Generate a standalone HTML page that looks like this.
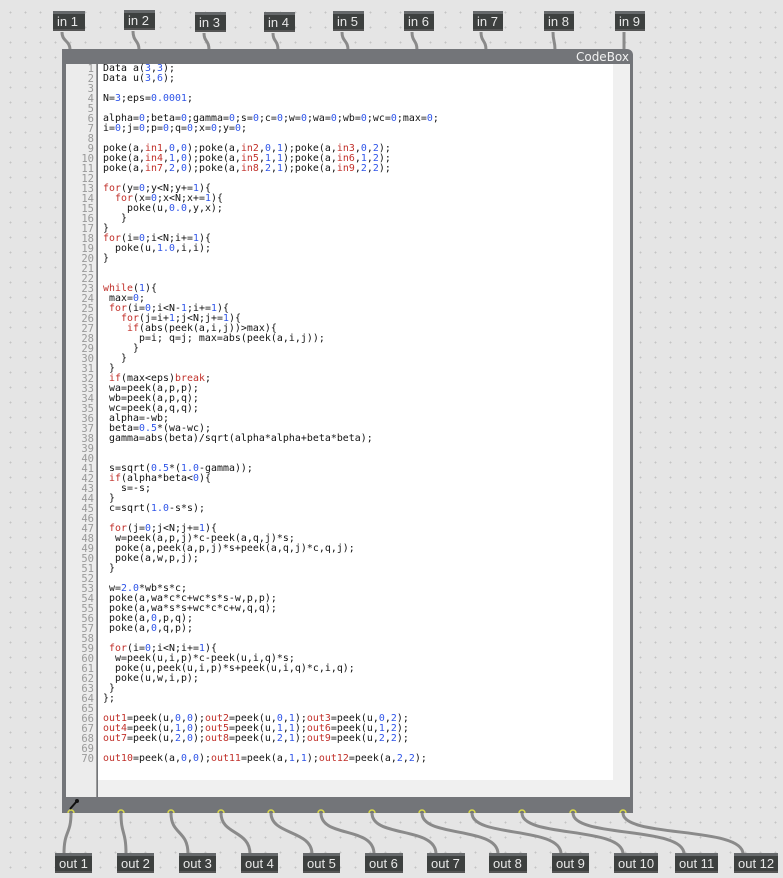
<!DOCTYPE html>
<html><head><meta charset="utf-8"><style>
*{margin:0;padding:0;box-sizing:border-box}
body{width:783px;height:878px;overflow:hidden;position:relative;background-color:#e5e5e5;
background-image:radial-gradient(circle,#c4c4c4 0.8px,transparent 1px);background-size:15px 15px;background-position:3px 5px;font-family:"Liberation Sans",sans-serif}
.obj{position:absolute;height:20px;background:#3d403f;border-top:3px solid #66696b;border-bottom:2px solid #555;color:#e8e8e8;font-size:13px;line-height:15px;padding-left:4px}
#cb{position:absolute;left:62px;top:49px;width:571px;height:764px;background:#737579;border-radius:0 6px 0 0}
#title{position:absolute;right:4px;top:1px;color:#f2f2f2;font-size:12px;font-family:"DejaVu Sans",sans-serif}
#gut{position:absolute;left:4px;top:15px;width:31px;height:733px;background:#ececec;border-right:1px solid #9a9a9a}
#code{position:absolute;left:36px;top:15px;width:532px;height:733px;background:#f0f0f0}
#white{position:absolute;left:0;top:0;width:515px;height:716px;background:#fff}
pre{position:absolute;font-family:"DejaVu Sans Mono","Liberation Mono",monospace;font-size:9.9px;line-height:10px;letter-spacing:0.05px}
#nums{left:0;top:0;width:28px;text-align:right;color:#999;font-size:10.5px;letter-spacing:0}
#src{left:5px;top:0;color:#111}
b{color:#c0302a;font-weight:normal}
i{color:#2f55e8;font-style:normal}
svg{position:absolute;left:0;top:0}
</style></head><body>
<div class="obj" style="left:53px;top:11px;width:32px">in 1</div>
<div class="obj" style="left:124px;top:10px;width:31px">in 2</div>
<div class="obj" style="left:195px;top:12px;width:31px">in 3</div>
<div class="obj" style="left:264px;top:12px;width:31px">in 4</div>
<div class="obj" style="left:333px;top:11px;width:31px">in 5</div>
<div class="obj" style="left:404px;top:11px;width:30px">in 6</div>
<div class="obj" style="left:473px;top:11px;width:30px">in 7</div>
<div class="obj" style="left:544px;top:11px;width:30px">in 8</div>
<div class="obj" style="left:615px;top:11px;width:30px">in 9</div>
<svg width="783" height="878">
<g stroke="#8a8a8a" stroke-width="3" fill="none">
<path d="M62 32 C62 42 70 40 70 50"/><path d="M133 31 C133 42 139 40 139 50"/><path d="M204 33 C204 42 209 40 209 50"/><path d="M273 33 C273 42 278 40 278 50"/><path d="M342 32 C342 42 348 40 348 50"/><path d="M412 32 C412 42 417 40 417 50"/><path d="M481 32 C481 42 486 40 486 50"/><path d="M553 32 C553 42 555 40 555 50"/><path d="M624 32 L624 50"/>
</g></svg>
<div id="cb"><div id="title">CodeBox</div>
<div id="gut"><pre id="nums">1
2
3
4
5
6
7
8
9
10
11
12
13
14
15
16
17
18
19
20
21
22
23
24
25
26
27
28
29
30
31
32
33
34
35
36
37
38
39
40
41
42
43
44
45
46
47
48
49
50
51
52
53
54
55
56
57
58
59
60
61
62
63
64
65
66
67
68
69
70</pre></div>
<div id="code"><div id="white"><pre id="src">Data a(<i>3</i>,<i>3</i>);
Data u(<i>3</i>,<i>6</i>);

N=<i>3</i>;eps=<i>0.0001</i>;

alpha=<i>0</i>;beta=<i>0</i>;gamma=<i>0</i>;s=<i>0</i>;c=<i>0</i>;w=<i>0</i>;wa=<i>0</i>;wb=<i>0</i>;wc=<i>0</i>;max=<i>0</i>;
i=<i>0</i>;j=<i>0</i>;p=<i>0</i>;q=<i>0</i>;x=<i>0</i>;y=<i>0</i>;

poke(a,<b>in1</b>,<i>0</i>,<i>0</i>);poke(a,<b>in2</b>,<i>0</i>,<i>1</i>);poke(a,<b>in3</b>,<i>0</i>,<i>2</i>);
poke(a,<b>in4</b>,<i>1</i>,<i>0</i>);poke(a,<b>in5</b>,<i>1</i>,<i>1</i>);poke(a,<b>in6</b>,<i>1</i>,<i>2</i>);
poke(a,<b>in7</b>,<i>2</i>,<i>0</i>);poke(a,<b>in8</b>,<i>2</i>,<i>1</i>);poke(a,<b>in9</b>,<i>2</i>,<i>2</i>);

<b>for</b>(y=<i>0</i>;y&lt;N;y+=<i>1</i>){
  <b>for</b>(x=<i>0</i>;x&lt;N;x+=<i>1</i>){
    poke(u,<i>0.0</i>,y,x);
   }
}
<b>for</b>(i=<i>0</i>;i&lt;N;i+=<i>1</i>){
  poke(u,<i>1.0</i>,i,i);
}


<b>while</b>(<i>1</i>){
 max=<i>0</i>;
 <b>for</b>(i=<i>0</i>;i&lt;N-<i>1</i>;i+=<i>1</i>){
   <b>for</b>(j=i+<i>1</i>;j&lt;N;j+=<i>1</i>){
    <b>if</b>(abs(peek(a,i,j))&gt;max){
      p=i; q=j; max=abs(peek(a,i,j));
     }
   }
 }
 <b>if</b>(max&lt;eps)<b>break</b>;
 wa=peek(a,p,p);
 wb=peek(a,p,q);
 wc=peek(a,q,q);
 alpha=-wb;
 beta=<i>0.5</i>*(wa-wc);
 gamma=abs(beta)/sqrt(alpha*alpha+beta*beta);


 s=sqrt(<i>0.5</i>*(<i>1.0</i>-gamma));
 <b>if</b>(alpha*beta&lt;<i>0</i>){
   s=-s;
 }
 c=sqrt(<i>1.0</i>-s*s);

 <b>for</b>(j=<i>0</i>;j&lt;N;j+=<i>1</i>){
  w=peek(a,p,j)*c-peek(a,q,j)*s;
  poke(a,peek(a,p,j)*s+peek(a,q,j)*c,q,j);
  poke(a,w,p,j);
 }

 w=<i>2.0</i>*wb*s*c;
 poke(a,wa*c*c+wc*s*s-w,p,p);
 poke(a,wa*s*s+wc*c*c+w,q,q);
 poke(a,<i>0</i>,p,q);
 poke(a,<i>0</i>,q,p);

 <b>for</b>(i=<i>0</i>;i&lt;N;i+=<i>1</i>){
  w=peek(u,i,p)*c-peek(u,i,q)*s;
  poke(u,peek(u,i,p)*s+peek(u,i,q)*c,i,q);
  poke(u,w,i,p);
 }
};

<b>out1</b>=peek(u,<i>0</i>,<i>0</i>);<b>out2</b>=peek(u,<i>0</i>,<i>1</i>);<b>out3</b>=peek(u,<i>0</i>,<i>2</i>);
<b>out4</b>=peek(u,<i>1</i>,<i>0</i>);<b>out5</b>=peek(u,<i>1</i>,<i>1</i>);<b>out6</b>=peek(u,<i>1</i>,<i>2</i>);
<b>out7</b>=peek(u,<i>2</i>,<i>0</i>);<b>out8</b>=peek(u,<i>2</i>,<i>1</i>);<b>out9</b>=peek(u,<i>2</i>,<i>2</i>);

<b>out10</b>=peek(a,<i>0</i>,<i>0</i>);<b>out11</b>=peek(a,<i>1</i>,<i>1</i>);<b>out12</b>=peek(a,<i>2</i>,<i>2</i>);</pre></div></div>
</div>
<svg width="783" height="878">
<g stroke="#8a8a8a" stroke-width="3" fill="none">
<path d="M71 813 C71 835 64 830 64 854"/>
<path d="M121 813 C121 835 126 830 126 854"/>
<path d="M171 813 C171 835 188 830 188 854"/>
<path d="M221 813 C221 835 250 830 250 854"/>
<path d="M271 813 C271 835 312 830 312 854"/>
<path d="M321 813 C321 838 374 826 374 854"/>
<path d="M372 813 C372 838 436 826 436 854"/>
<path d="M422 813 C422 838 498 826 498 854"/>
<path d="M472 813 C472 838 561 826 561 854"/>
<path d="M522 813 C522 838 623 826 623 854"/>
<path d="M573 813 C573 838 684 826 684 854"/>
<path d="M623 813 C623 838 743 826 743 854"/>
</g>
<g fill="none" stroke="#d9d94a" stroke-width="1.5">
<path d="M68 813 a3 3 0 0 1 6 0"/><path d="M118 813 a3 3 0 0 1 6 0"/><path d="M168 813 a3 3 0 0 1 6 0"/><path d="M218 813 a3 3 0 0 1 6 0"/><path d="M268 813 a3 3 0 0 1 6 0"/><path d="M318 813 a3 3 0 0 1 6 0"/><path d="M369 813 a3 3 0 0 1 6 0"/><path d="M419 813 a3 3 0 0 1 6 0"/><path d="M469 813 a3 3 0 0 1 6 0"/><path d="M519 813 a3 3 0 0 1 6 0"/><path d="M570 813 a3 3 0 0 1 6 0"/><path d="M620 813 a3 3 0 0 1 6 0"/>
</g>
<path d="M70 809 L77 801" stroke="#111" stroke-width="2"/><circle cx="77" cy="801" r="2" fill="#111"/>
</svg>
<div class="obj" style="left:55px;top:853px;width:37px">out 1</div>
<div class="obj" style="left:117px;top:853px;width:37px">out 2</div>
<div class="obj" style="left:179px;top:853px;width:37px">out 3</div>
<div class="obj" style="left:241px;top:853px;width:37px">out 4</div>
<div class="obj" style="left:303px;top:853px;width:37px">out 5</div>
<div class="obj" style="left:365px;top:853px;width:38px">out 6</div>
<div class="obj" style="left:427px;top:853px;width:38px">out 7</div>
<div class="obj" style="left:489px;top:853px;width:38px">out 8</div>
<div class="obj" style="left:552px;top:853px;width:37px">out 9</div>
<div class="obj" style="left:614px;top:853px;width:44px">out 10</div>
<div class="obj" style="left:675px;top:853px;width:43px">out 11</div>
<div class="obj" style="left:734px;top:853px;width:44px">out 12</div>
</body></html>
